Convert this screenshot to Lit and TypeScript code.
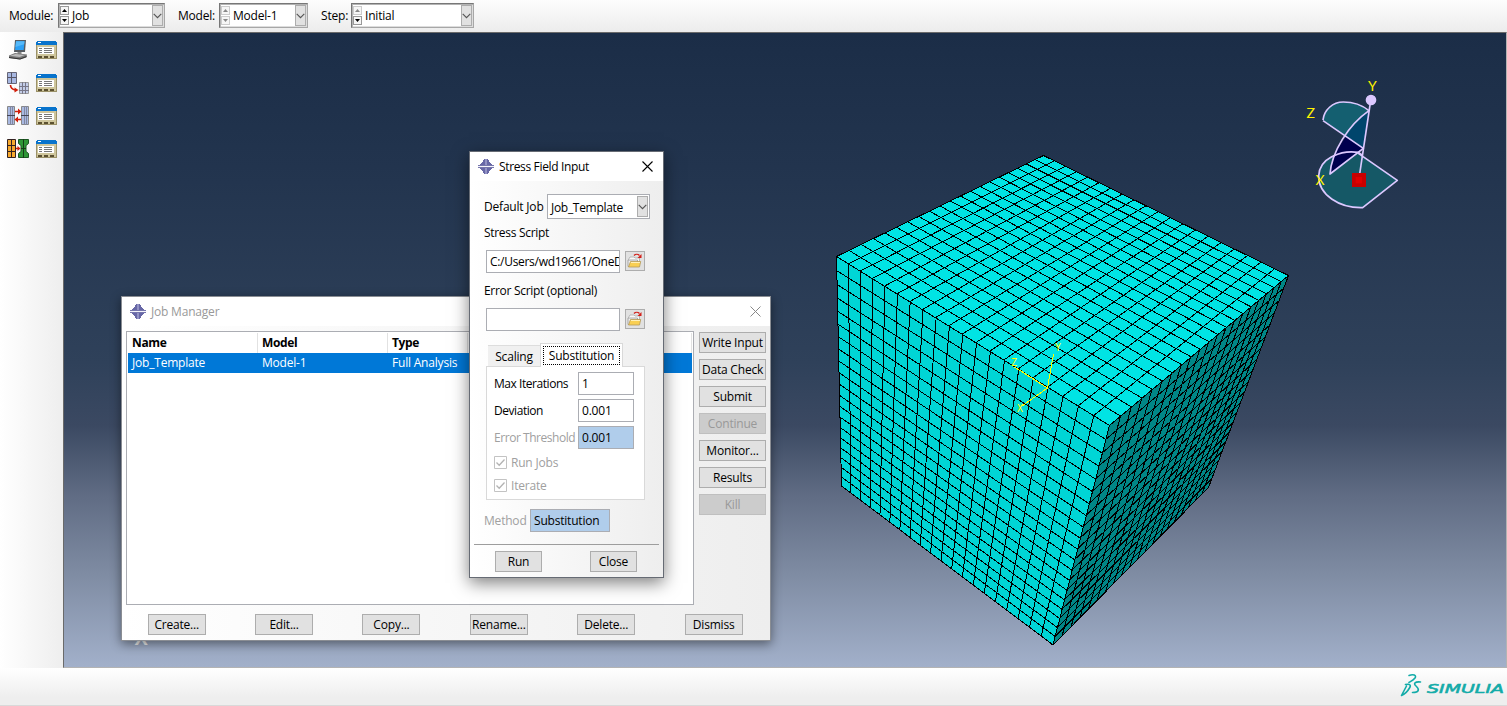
import { LitElement, html, svg, css } from "lit";
import { customElement } from "lit/decorators.js";

type P = [number, number];

const N = 20;

/** Projects the unit square onto the quad a(0,0) b(1,0) c(1,1) d(0,1). */
function projector(a: P, b: P, c: P, d: P) {
  const dx1 = b[0] - c[0], dx2 = d[0] - c[0], dx3 = a[0] - b[0] + c[0] - d[0];
  const dy1 = b[1] - c[1], dy2 = d[1] - c[1], dy3 = a[1] - b[1] + c[1] - d[1];
  const det = dx1 * dy2 - dx2 * dy1;
  const g = (dx3 * dy2 - dx2 * dy3) / det;
  const h = (dx1 * dy3 - dx3 * dy1) / det;
  const A = b[0] - a[0] + g * b[0], B = d[0] - a[0] + h * d[0];
  const D = b[1] - a[1] + g * b[1], E = d[1] - a[1] + h * d[1];
  return (u: number, v: number): P => {
    const w = g * u + h * v + 1;
    return [(A * u + B * v + a[0]) / w, (D * u + E * v + a[1]) / w];
  };
}

function meshPath(a: P, b: P, c: P, d: P): string {
  const p = projector(a, b, c, d);
  const f = (q: P) => `${q[0].toFixed(2)} ${q[1].toFixed(2)}`;
  let s = "";
  for (let i = 0; i <= N; i++) {
    const t = i / N;
    s += `M${f(p(t, 0))}L${f(p(t, 1))}M${f(p(0, t))}L${f(p(1, t))}`;
  }
  return s;
}

const T: P = [1043.5, 155.5], L: P = [836.5, 256.5], R: P = [1288.5, 275.5], F: P = [1109.5, 425.5];
const BL: P = [841.5, 486], BF: P = [1053, 645], BR: P = [1208.5, 487.5];

const faces: [P[], string][] = [
  [[T, R, F, L], "#00e4e4"],
  [[L, F, BF, BL], "#00d6d6"],
  [[F, R, BR, BF], "#008787"],
];

const base = css`
  :host { box-sizing: border-box; }
  *, *::before, *::after { box-sizing: border-box; }
  svg { display: block; flex: none; }
`;

const appIcon = svg`<svg width="16" height="17" viewBox="0 0 16 17" shape-rendering="crispEdges">
  <path d="M6 1h4v1h1v2h1v1h1v1h1v1H2V6h1V5h1V4h1V2h1z" fill="#6767a6"/>
  <path d="M6 16h4v-1h1v-2h1v-1h1v-1h1v-1H2v1h1v1h1v1h1v2h1z" fill="#6767a6"/>
  <path d="M7 1h2v6H7zM7 10h2v6H7z" fill="#9292c4"/><path d="M0 8h16v1H0z" fill="#f4f4fb"/>
  <path d="M0 7h16v1H0zM0 9h16v1H0z" fill="#7676ad"/></svg>`;

const chevron = svg`<svg width="9" height="6" viewBox="0 0 9 6"><path d="M.7.8 4.500 4.600 8.300.8" fill="none" stroke="#555" stroke-width="1.150"/></svg>`;

const folder = svg`<svg width="16" height="16" viewBox="0 0 16 16">
  <path d="M1.500 6.500 3 4h4l1 1h4.500V9H1.500z" fill="#fafafa" stroke="#aaa" stroke-width=".8"/>
  <path d="M1 13.500V7h9.500v6.500z" fill="#eee" stroke="#999" stroke-width=".8"/>
  <path d="M1.500 14 3.500 8.500h10.200L12.500 14z" fill="#f9cf52" stroke="#b59a5a" stroke-width=".8"/>
  <path d="M4 9.500h9" stroke="#fff0b8"/>
  <path d="M7 2.500C8.500 1 11 1 12.500 2.500" fill="none" stroke="#d3201a" stroke-width="1.400"/><path d="M14.500 1v4h-4z" fill="#d3201a"/></svg>`;

@customElement("combo-box")
class ComboBox extends LitElement {
  static properties = { value: {}, spin: {} };
  declare value: string;
  declare spin: string;
  static styles = [base, css`
    :host { display: flex; align-items: stretch; height: 25px; background: #fff; border: 1px solid #a7a7a7; padding: 1px 1px; border-top-color: #777; border-left-color: #777; box-shadow: inset 1px 1px 0 #b3b3b3, inset -1px -1px 0 #ddd; }
    :host([plain]) { border: 1px solid #abadb3; box-shadow: none; letter-spacing: -0.3px; }
    .spin { display: flex; flex-direction: column; width: 9px; margin: 1px 0 1px 0; gap: 1px; }
    .cell { flex: 1; display: flex; align-items: center; justify-content: center; background: #f6f6f6; border: 1px solid #ccc; color: #888; }
    .on { color: #000; border-color: #999; }
    .text { flex: 1; line-height: 22px; padding-left: 3px; white-space: nowrap; }
    :host([plain]) .text { padding-left: 2px; line-height: 23px; }
    .drop { width: 11px; background: #e1e1e1; border: 1px solid #adadad; display: flex; align-items: center; justify-content: center; }
  `];
  render() {
    const arrow = (up: boolean, on: boolean) => html`<span class="cell ${on ? "on" : ""}"><svg width="5" height="3" viewBox="0 0 5 3"><path d=${up ? "M0 3 2.500 0 5 3z" : "M0 0 2.500 3 5 0z"} fill="currentColor"/></svg></span>`;
    return html`${this.spin ? html`<span class="spin">${arrow(true, this.spin === "both")}${arrow(false, this.spin !== "none")}</span>` : ""}
      <span class="text">${this.value}</span><span class="drop">${chevron}</span>`;
  }
}

@customElement("mesh-viewport")
class MeshViewport extends LitElement {
  static styles = [base, css`
    :host { display: block; overflow: hidden; border-top: 1px solid #6a6a6a; border-left: 1px solid #6a6a6a; border-bottom: 1px solid #b3b3b3; border-right: 1px solid #b3b3b3;
      background: linear-gradient(#1b2d47 0, #22344e 21%, #2f415a 52%, #3b4962 62%, #606c84 73%, #7e8ba2 85%, #a2b0ca 100%); }
    .lab { font-family: Lato, sans-serif; font-weight: 400; fill: #fff200; font-size: 14px; }
    .tiny { font-family: "DejaVu Sans Mono", monospace; fill: #ffff00; font-size: 10px; }
    .big { font-family: "Liberation Sans", sans-serif; font-weight: bold; fill: #eee; font-size: 20px; }
  `];
  render() {
    return html`<svg width="1442" height="635" viewBox="64 33 1442 635">
      ${faces.map(([q, c]) => svg`<path d="M${q.map((p) => p.join(" ")).join("L")}Z" fill=${c} shape-rendering="crispEdges"/>
        <path d=${meshPath(q[0], q[1], q[2], q[3])} fill="none" stroke="#000" stroke-width="1" shape-rendering="crispEdges"/>`)}
      <path d="M1047.500 388 1053.500 354M1047.500 388 1014.500 367M1047.500 388 1022 406" fill="none" stroke="#ff0" shape-rendering="crispEdges"/>
      <text class="tiny" x="1055" y="351">Y</text><text class="tiny" x="1011" y="366">Z</text><text class="tiny" x="1017" y="412">X</text>
      <g transform="translate(1290 70) scale(.33333)" stroke="#dcc8ff" stroke-width="5" stroke-linejoin="round" fill="none">
        <path d="M205 250 322 331 218 413C150 415 85 375 86 318 88 265 145 243 205 247Z" fill="#155866"/>
        <path d="M99 150C102 120 128 96 160 96 190 96 215 104 237 122L168 200Z" fill="#145f70" stroke="none"/>
        <path d="M237 122C209 145 187 168 168 200L220 235Z" fill="#00456c" stroke="none"/>
        <path d="M168 200 220 235 120 312C122 275 145 230 168 200Z" fill="#00004e" stroke="none"/>
        <path d="M99 150C102 120 128 96 160 96 190 96 215 104 237 122C175 165 125 245 120 312L220 235 99 152"/>
        <path d="M130 258C150 248 178 243 205 247L218 256"/>
        <path d="M242 92 209 312"/>
        <circle cx="243" cy="90" r="13.500" fill="#dcc8ff"/>
        <path d="M186 309h42v42h-42z" fill="#c80000" stroke="none"/><path d="M197 321h19v19h-19z" fill="#e00000" stroke="none"/>
      </g>
      <text class="lab" x="1368" y="91">Y</text><text class="lab" x="1306.500" y="118">Z</text><text class="lab" x="1315.500" y="185">X</text>
      <text class="big" x="134.500" y="645">X</text>
    </svg>`;
  }
}

@customElement("job-manager")
class JobManager extends LitElement {
  static styles = [base, css`
    :host { display: flex; flex-direction: column; background: linear-gradient(90deg, #fff, #eee); border: 1px solid #8a8d93; box-shadow: 0 3px 10px rgba(0,0,0,.45); }
    .title { display: flex; align-items: center; height: 29px; background: #fff; color: #999; padding: 0 9px 0 8px; gap: 5px; }
    .title span { flex: 1; }
    .main { display: flex; gap: 5px; padding: 5px 4px 0 4px; height: 279px; }
    .table { width: 568px; height: 274px; background: #fff; border: 1px solid #abadb3; padding: 1px; }
    .row { display: grid; grid-template-columns: 130px 130px 80px 1fr; height: 20px; line-height: 20px; }
    .row span { padding-left: 4px; border-right: 1px solid #e2e2e2; white-space: nowrap; }
    .head { font-weight: bold; letter-spacing: -0.35px; }
    .sel { background: #0078d7; color: #fff; }
    .sel span { border-color: transparent; }
    .side { display: flex; flex-direction: column; gap: 6px; flex: 1; padding-top: 1px; }
    .btn { height: 21px; line-height: 19px; text-align: center; background: #e1e1e1; border: 1px solid #adadad; white-space: nowrap; }
    .off { background: #ccc; border-color: #bfbfbf; color: #999; }
    .foot { display: grid; grid-template-columns: repeat(6, 107.4px); justify-items: center; padding: 9px 0 0 1px; }
    .foot .btn { width: 58px; }
  `];
  render() {
    const side = ["Write Input", "Data Check", "Submit", "Continue", "Monitor...", "Results", "Kill"];
    return html`<div class="title">${appIcon}<span>Job Manager</span>
        <svg width="11" height="11" viewBox="0 0 11 11"><path d="M.5.5l10 10M10.500.5l-10 10" stroke="#888" fill="none"/></svg></div>
      <div class="main"><div class="table">
        <div class="row head"><span>Name</span><span>Model</span><span>Type</span><span></span></div>
        <div class="row sel"><span>Job_Template</span><span>Model-1</span><span>Full Analysis</span><span></span></div></div>
        <div class="side">${side.map((s) => html`<div class="btn ${s === "Continue" || s === "Kill" ? "off" : ""}">${s}</div>`)}</div></div>
      <div class="foot">${["Create...", "Edit...", "Copy...", "Rename...", "Delete...", "Dismiss"].map((s) => html`<div class="btn">${s}</div>`)}</div>`;
  }
}

@customElement("stress-dialog")
class StressDialog extends LitElement {
  static styles = [base, css`
    :host { display: flex; flex-direction: column; background: linear-gradient(90deg, #fff, #eee); border: 1px solid #666b74; box-shadow: 0 5px 16px rgba(0,0,0,.5); color: #000; }
    .title { display: flex; align-items: center; height: 29px; background: #fff; padding: 0 10px 0 8px; gap: 5px; letter-spacing: -0.35px; }
    .title span { flex: 1; }
    .body { display: flex; flex-direction: column; padding: 13px 12px 0 14px; height: 363px; }
    .line { display: flex; align-items: center; white-space: nowrap; }
    .pick { height: 25px; }
    .pick span { width: 63px; }
    .pick combo-box { width: 103px; }
    .cap { height: 20px; line-height: 20px; margin-top: 4px; letter-spacing: -0.3px; }
    .file { margin: 7px 0 0 2px; gap: 5px; height: 23px; }
    .in { height: 23px; line-height: 21px; background: #fff; border: 1px solid #abadb3; padding-left: 3px; overflow: hidden; white-space: nowrap; }
    .file .in { width: 134px; letter-spacing: -0.3px; }
    .fb { width: 20px; height: 20px; background: #e1e1e1; border: 1px solid #adadad; display: flex; align-items: center; justify-content: center; margin-top: -1px; }
    .cap2 { margin-top: 8px; }
    .tabs { display: flex; align-items: flex-end; height: 23px; margin: 12px 0 0 4px; }
    .tab { height: 21px; line-height: 21px; width: 52px; text-align: center; background: #f0f0f0; border-top: 1px solid #ddd; }
    .cur { position: relative; width: 83px; height: 24px; margin-bottom: -1px; background: #fff; border: 1px solid #d9d9d9; border-bottom: none; padding: 2px; }
    .focus { display: block; border: 1px dotted #000; height: 19px; line-height: 17px; }
    .panel { margin-left: 2px; width: 159px; height: 134px; background: #fff; border: 1px solid #d9d9d9; padding: 5px 7px 0 7px; display: flex; flex-direction: column; }
    .field { height: 23px; margin-bottom: 4px; }
    .field span { width: 84px; letter-spacing: -0.45px; }
    .field .in, .meth .in { width: 56px; }
    .dim { color: #a0a0a0; }
    .blue .in, .meth .in { background: #b0cdeb; color: #000; }
    .check { gap: 4px; height: 23px; margin-top: -2px; }
    .check + .check { margin-top: 0; }
    .meth { margin-top: 9px; }
    .meth span { width: 46px; }
    .meth .in { width: 80px; }
    .foot { margin: 0 4px; border-top: 1px solid #9d9d9d; display: flex; padding: 6px 22px 0 21px; justify-content: space-between; }
    .btn { width: 47px; height: 21px; line-height: 19px; text-align: center; background: #e1e1e1; border: 1px solid #adadad; }
  `];
  render() {
    const field = (l: string, v: string, dim = false) => html`<div class="line field ${dim ? "dim blue" : ""}"><span>${l}</span><div class="in">${v}</div></div>`;
    const check = (l: string) => html`<div class="line check dim"><svg width="13" height="13" viewBox="0 0 13 13"><path d="M.5.5h12v12H.5z" fill="#fff" stroke="#c3c3c3"/><path d="M2.500 6.500 5.200 9.300 10.500 3.500" fill="none" stroke="#b3b3b3" stroke-width="1.300"/></svg>${l}</div>`;
    return html`<div class="title">${appIcon}<span>Stress Field Input</span>
        <svg width="11" height="11" viewBox="0 0 11 11"><path d="M.5.5l10 10M10.500.5l-10 10" stroke="#000" stroke-width="1.100" fill="none"/></svg></div>
      <div class="body">
        <div class="line pick"><span>Default Job</span><combo-box plain value="Job_Template"></combo-box></div>
        <div class="cap">Stress Script</div>
        <div class="line file"><div class="in">C:/Users/wd19661/OneD</div><div class="fb">${folder}</div></div>
        <div class="cap cap2">Error Script (optional)</div>
        <div class="line file"><div class="in"></div><div class="fb">${folder}</div></div>
        <div class="tabs"><div class="tab">Scaling</div><div class="tab cur"><span class="focus">Substitution</span></div></div>
        <div class="panel">${field("Max Iterations", "1")}${field("Deviation", "0.001")}${field("Error Threshold", "0.001", true)}
          ${check("Run Jobs")}${check("Iterate")}</div>
        <div class="line meth dim"><span>Method</span><div class="in">Substitution</div></div>
      </div>
      <div class="foot"><div class="btn">Run</div><div class="btn">Close</div></div>`;
  }
}

const monitor = svg`<svg width="20" height="20" viewBox="0 0 20 20"><path d="M7 0h11l-1 12H6z" fill="#555b61"/><path d="M8 1.200h8.500l-.8 8.800H7z" fill="#2da0f4"/><path d="M8 1.200h8.500l-.3 3L7.500 7z" fill="#55b9fa"/><path d="M9.500 12h4v2.500h-4z" fill="#888"/><path d="M1 15.500 7 13l12 1.500-.5 3L12 19.500 1 18z" fill="#777"/><path d="M2 15.700 7.500 14l9.500 1-5.500 2z" fill="#bbb"/><path d="M1 17.500l11 1.500 6.500-2.500" stroke="#333" fill="none"/></svg>`;
const manager = svg`<svg width="21" height="18" viewBox="0 0 21 18" shape-rendering="crispEdges"><path d="M1 0h19v1h1v17H0V1h1z" fill="#9b9168"/><path d="M1 4h19v13H1z" fill="#cfc69c"/><path d="M1 0h19v1h1v3H0V1h1z" fill="#0873cc"/><path d="M2 1h3v1H2z" fill="#fff"/><path d="M2 6h16v7H2z" fill="#fff"/><path d="M3 7h3M3 9h3M3 11h3M8 7h8M8 9h8M8 11h8" transform="translate(0 .5)" stroke="#777"/><path d="M2 15h4v2H2zM8 15h4v2H8zM14 15h4v2h-4z" fill="#5b5030"/></svg>`;
const submodel = svg`<svg width="22" height="22" viewBox="0 0 22 22"><path d="M.5.500h9v11h-9z" fill="#a8b8e2" stroke="#667"/><path d="M4.500 .5v11M.5 5.500h9" stroke="#556"/><path d="M12.500 10.500h9v11h-9z" fill="#c3cde8" stroke="#999"/><path d="M15.500 10v12M18.500 10v12M12 14.500h10M12 18.500h10" stroke="#778"/><path d="M3.500 13c0 3 2 4.500 5 5" fill="none" stroke="#d01d08" stroke-width="1.600"/><path d="M7.500 15.500v5L11.500 18z" fill="#d01d08"/></svg>`;
const coexec = svg`<svg width="22" height="19" viewBox="0 0 22 19"><path d="M.5.500h7v18h-7zM14.500.500h7v18h-7z" fill="#a9b9e2" stroke="#888"/><path d="M3.500 0v19M5.500 0v19M17.500 0v19M19.500 0v19" stroke="#8288a0"/><path d="M0 9.500h8M14 9.500h8" stroke="#445"/><path d="M8 5.500h4M14 13.500h-4" stroke="#d01d08" stroke-width="1.500"/><path d="M11 2.500v6L14.500 5.500zM11 10.500v6L7.500 13.500z" fill="#d01d08"/></svg>`;
const optimize = svg`<svg width="22" height="19" viewBox="0 0 22 19"><path d="M.500.500h8v18h-8z" fill="#f7a92d" stroke="#322"/><path d="M4.500 0v19M0 6.500h9M0 12.500h9" stroke="#322"/><path d="M11.500.500h10v4l-2.500 2v6l2.500 2v4h-10v-4l2.500-2v-6l-2.500-2z" fill="#2e9636" stroke="#1c5622"/><path d="M16.500 0v19M14 9.500h5" stroke="#133d16"/><path d="M9 9.500h2" stroke="#d01d08" stroke-width="1.500"/><path d="M10.500 7v5L13.500 9.500z" fill="#d01d08"/></svg>`;

@customElement("app-root")
class AppRoot extends LitElement {
  static styles = [base, css`
    :host { display: flex; flex-direction: column; position: relative; width: 1507px; height: 706px; overflow: hidden; background: #f0f0f0; color: #000;
      font: 12px "Open Sans", "Noto Sans", sans-serif; letter-spacing: -0.2px; }
    .bar { display: flex; align-items: center; height: 32px; flex: none; padding-left: 9px; padding-bottom: 1px; background: linear-gradient(#fdfdfd, #ececec); }
    .l1 { width: 49px; } .c1 { width: 107px; margin-right: 13px; }
    .l2 { width: 41px; } .c2 { width: 89px; margin-right: 13px; }
    .l3 { width: 30px; } .c3 { width: 123px; }
    .mid { display: flex; height: 636px; }
    .tools { width: 63px; flex: none; display: grid; grid-template-columns: 22px 21px; grid-auto-rows: 33px; column-gap: 7px; padding: 1px 0 0 7px; align-items: center; justify-items: center; align-content: start; background: linear-gradient(90deg, #fff, #eee); }
    mesh-viewport { flex: 1; }
    .status { flex: 1; display: flex; flex-direction: column; background: linear-gradient(#fff, #eee 80%); border-bottom: 1px solid #d9d9d9; align-items: flex-end; padding: 5px 1px 0 0; }
    .brand { font-family: "DejaVu Sans", sans-serif; font-style: oblique; font-size: 12.5px; fill: #12aba8; stroke: #12aba8; stroke-width: .55px; letter-spacing: 0; }
    job-manager { position: absolute; left: 121px; top: 296px; width: 650px; height: 345px; }
    stress-dialog { position: absolute; left: 469px; top: 151px; width: 195px; height: 427px; }
  `];
  render() {
    return html`<div class="bar"><span class="l1">Module:</span><combo-box class="c1" spin="both" value="Job"></combo-box>
        <span class="l2">Model:</span><combo-box class="c2" spin="none" value="Model-1"></combo-box>
        <span class="l3">Step:</span><combo-box class="c3" spin="down" value="Initial"></combo-box></div>
      <div class="mid"><div class="tools">${[monitor, submodel, coexec, optimize].map((i) => html`${i}${manager}`)}</div><mesh-viewport></mesh-viewport></div>
      <div class="status"><svg width="106" height="26" viewBox="0 0 106 26">
        <g fill="none" stroke="#12aba8" stroke-width="1.600" stroke-linecap="round" stroke-linejoin="round"><path d="M9 2.500C13 1 17 2 15 5 13.500 7 11.500 8 9 9.500M5.500 11.500C9.500 10.500 11.500 12 9.500 15 7.500 18.500 4 21.500 1.500 22.500L6.500 13"/><path d="M20.500 9C15 8.500 13 10.500 16 13 19.500 16 19.500 19.500 12.500 19.500"/></g>
        <text class="brand" x="27" y="20" textLength="77" lengthAdjust="spacingAndGlyphs">SIMULIA</text></svg></div>
      <job-manager></job-manager><stress-dialog></stress-dialog>`;
  }
}
